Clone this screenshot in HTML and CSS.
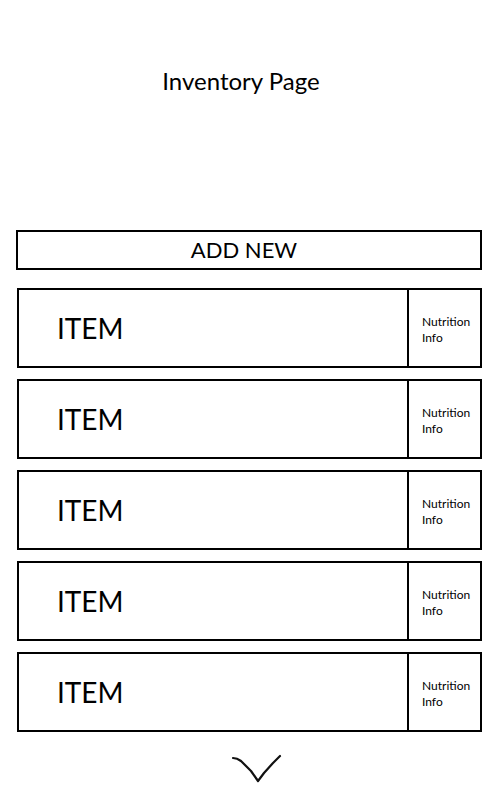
FILE: index.html
```html
<!DOCTYPE html>
<html lang="en" dir="ltr">
<head>
  <meta charset="UTF-8">
  <title>Inventory Page</title>
  <link rel="stylesheet" href="styles.css">
</head>
<body>
  <div class="header">
    <h1 class="title">Inventory Page</h1>
  </div>

  <div class="add-new">ADD NEW</div>

  <div class="item-list">
    <div class="item">
      <div class="item-name">ITEM</div>
      <div class="item-info">Nutrition<br>Info</div>
    </div>
    <div class="item">
      <div class="item-name">ITEM</div>
      <div class="item-info">Nutrition<br>Info</div>
    </div>
    <div class="item">
      <div class="item-name">ITEM</div>
      <div class="item-info">Nutrition<br>Info</div>
    </div>
    <div class="item">
      <div class="item-name">ITEM</div>
      <div class="item-info">Nutrition<br>Info</div>
    </div>
    <div class="item">
      <div class="item-name">ITEM</div>
      <div class="item-info">Nutrition<br>Info</div>
    </div>
  </div>

  <div class="more">
    <svg width="52" height="32" viewBox="0 0 52 32">
      <path d="M2 4 Q6 4 10 7 L20 17 L27 27 L33 19 L42 9 L49 2" fill="none" stroke="#111" stroke-width="2.2" stroke-linecap="round" stroke-linejoin="round"/>
    </svg>
  </div>
</body>
</html>
```

FILE: styles.css
```css
body {
  margin: 0;
  background: #fff;
  color: #000;
  font-family: Lato, 'Open Sans', sans-serif;
}
.header {
  height: 230px;
  padding-top: 66px;
  box-sizing: border-box;
}
.title {
  margin: 0;
  font-size: 24px;
  font-weight: normal;
  text-align: center;
  padding-right: 18px;
}
.add-new {
  margin: 0 18px 0 16px;
  height: 40px;
  box-sizing: border-box;
  border: 2px solid #000;
  text-align: center;
  font-size: 22px;
  line-height: 35px;
  padding-right: 10px;
}
.item-list {
  margin-top: 18px;
}
.item {
  display: flex;
  margin: 0 18px 11px 17px;
  height: 80px;
  box-sizing: border-box;
  border: 2px solid #000;
}
.item-name {
  flex: 1;
  padding-left: 38px;
  font-size: 28px;
  line-height: 76px;
}
.item-info {
  width: 58px;
  border-left: 2px solid #000;
  padding: 24px 0 0 13px;
  font-size: 12px;
  line-height: 16px;
}
.more {
  display: flex;
  justify-content: center;
  padding: 11px 0 0 14px;
}
```
